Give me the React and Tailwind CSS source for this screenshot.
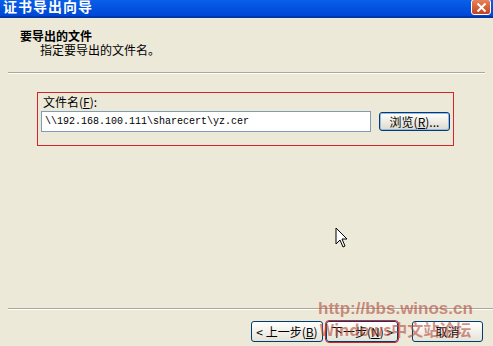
import React from 'react'

const cjk = { fontFamily: '"Noto Sans CJK SC", "Liberation Sans", sans-serif' }
const mono = { fontFamily: '"Liberation Mono", "Noto Sans CJK SC", monospace' }

function XpButton({ children, className = '' }) {
  return (
    <div className={`flex items-center justify-center h-[21px] rounded-[3px] border border-[#003c74] bg-gradient-to-b from-white to-[#e6e3d6] text-[12px] text-black ${className}`}>
      {children}
    </div>
  )
}

export default function App() {
  return (
    <div className="w-[493px] h-[346px] bg-[#ece9d8] flex flex-col overflow-hidden relative" style={cjk}>
      {/* title bar */}
      <div className="h-[18px] flex items-center justify-between bg-gradient-to-b from-[#0a5fe8] to-[#0045d6] border-b-2 border-[#0037a8]">
        <span className="pl-[3px] text-white font-bold text-[14px] leading-none -mt-[4px] tracking-[1px]">证书导出向导</span>
        <div className="w-[20px] h-[16px] -mt-[2px] mr-[2px] rounded-[3px] border border-white bg-gradient-to-b from-[#e8825c] to-[#c4401c] flex items-center justify-center">
          <svg width="11" height="11" viewBox="0 0 11 11">
            <path d="M1.5 1.5 L9.5 9.5 M9.5 1.5 L1.5 9.5" stroke="white" strokeWidth="2" />
          </svg>
        </div>
      </div>

      {/* header */}
      <div className="pt-[11px] pl-[20px] h-[54px]">
        <div className="text-[12px] font-bold leading-[14px] text-black">要导出的文件</div>
        <div className="pl-[20px] text-[12px] leading-[14px] text-black">指定要导出的文件名。</div>
      </div>
      <div className="mx-[8px] border-t border-[#aca899] border-b border-b-white" />

      {/* content */}
      <div className="flex-1 pt-[18px] pl-[37px]">
        <div className="w-[417px] h-[54px] border border-[#d7242c] pl-[3px] pt-[2px]">
          <div className="text-[12px] leading-[14px] pl-[2px] text-black">文件名(<span className="underline">F</span>):</div>
          <div className="flex items-center mt-[2px] gap-[8px]">
            <div className="w-[330px] h-[21px] bg-white border border-[#7f9db9] flex items-center pl-[3px] text-[10px] text-black" style={mono}>
              \\192.168.100.111\sharecert\yz.cer
            </div>
            <div className="w-[71px] h-[19px] rounded-[3px] border border-[#003c74] bg-gradient-to-b from-white to-[#dcd9cc] shadow-[inset_0_0_0_1px_#98b8ea] flex items-center justify-center text-[12px] text-black">
              浏览(<span className="underline">R</span>)...
            </div>
          </div>
        </div>
      </div>

      {/* bottom */}
      <div className="ml-[8px] border-t border-[#aca899] border-b border-b-white" />
      <div className="h-[36px] flex items-start pt-[11px] pl-[251px]">
        <XpButton className="w-[72px]">&lt; 上一步(<span className="underline">B</span>)</XpButton>
        <XpButton className="w-[72px] ml-[3px] outline outline-1 outline-[#d7242c]">下一步(<span className="underline">N</span>) &gt;</XpButton>
        <XpButton className="w-[71px] ml-[14px]">取消</XpButton>
      </div>

      {/* watermark */}
      <div className="absolute left-[318px] top-[300px] flex flex-col items-center pointer-events-none text-[#b04a3a]/60 font-bold leading-none">
        <span className="text-[17px]" style={{ fontFamily: '"Liberation Sans", sans-serif' }}>http://bbs.winos.cn</span>
        <span className="text-[16px] mt-[4px]">Windows中文站论坛</span>
      </div>

      {/* cursor */}
      <svg className="absolute left-[335px] top-[227px]" width="14" height="22" viewBox="0 0 14 22">
        <path d="M1 1 L1 17 L5 13 L8 20 L10 19 L7 12 L12 12 Z" fill="white" stroke="black" strokeWidth="1" />
      </svg>
    </div>
  )
}
